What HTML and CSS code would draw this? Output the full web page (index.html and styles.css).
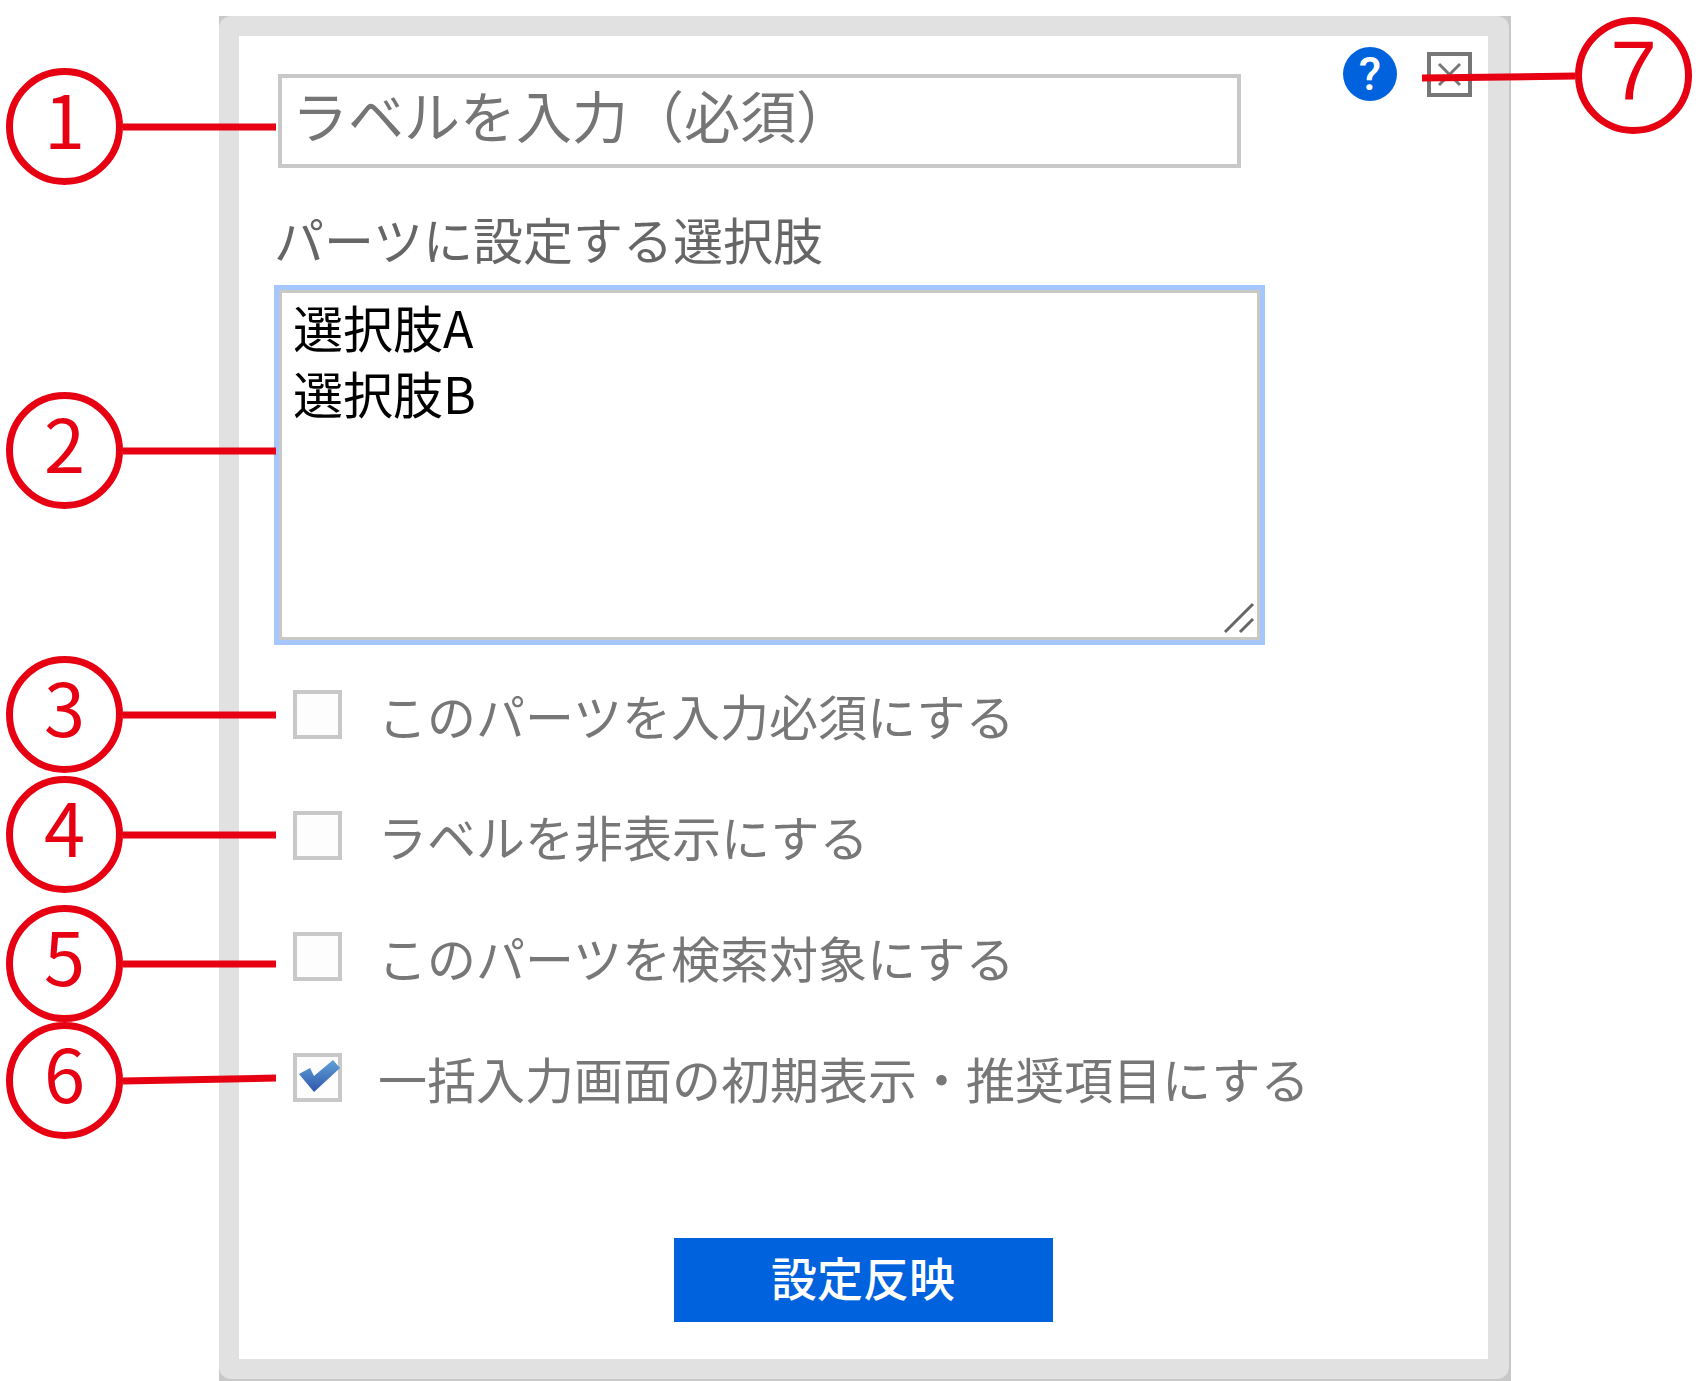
FILE: index.html
```
<!DOCTYPE html>
<html lang="ja">
<head>
  <meta charset="UTF-8" />
  <meta name="viewport" content="width=device-width, initial-scale=1" />
  <title>パーツ設定</title>
  <link rel="stylesheet" href="styles.css">
</head>
<body>

  <main class="dialog">
    <form class="panel">
      <div class="title-row">
        <input type="text" class="label-input" aria-label="ラベル" placeholder="ラベルを入力（必須）" />
        <div class="tools">
          <button type="button" class="help-btn" aria-label="ヘルプ">?</button>
          <button type="button" class="close-btn" aria-label="閉じる">
            <svg viewBox="0 0 37 37" width="37" height="37"><path d="M8 8L29 29M29 8L8 29" stroke="#777" stroke-width="3" fill="none" /></svg>
          </button>
        </div>
      </div>

      <label class="choices-label" for="choices">パーツに設定する選択肢</label>
      <div class="choices">
        <textarea id="choices" spellcheck="false">選択肢A
選択肢B</textarea>
        <svg class="grip" viewBox="0 0 32 32" width="32" height="32"><path d="M2 30L30 2M17 30L30 17" stroke="#666" stroke-width="3" fill="none" /></svg>
      </div>

      <div class="options">
        <label class="option">
          <span class="box"><input type="checkbox" /></span>
          このパーツを入力必須にする
        </label>
        <label class="option">
          <span class="box"><input type="checkbox" /></span>
          ラベルを非表示にする
        </label>
        <label class="option">
          <span class="box"><input type="checkbox" /></span>
          このパーツを検索対象にする
        </label>
        <label class="option">
          <span class="box">
            <input type="checkbox" checked />
            <svg class="tick" viewBox="0 0 49 49" width="49" height="49">
              <defs>
                <linearGradient id="tickFill" x1="0" y1="0" x2="0" y2="1">
                  <stop offset="0" stop-color="#5fa3d6" />
                  <stop offset="1" stop-color="#2f55ae" />
                </linearGradient>
              </defs>
              <path d="M6 21L17 15L21 23L40 7L47 15L21 39Z" fill="url(#tickFill)" />
            </svg>
          </span>
          一括入力画面の初期表示・推奨項目にする
        </label>
      </div>

      <button type="button" class="apply-btn">設定反映</button>
    </form>

    <!-- numbered callouts -->
    <div class="callout c1"><span class="num">1</span><svg class="line" viewBox="0 0 153 20"><path d="M0 10H153" /></svg></div>
    <div class="callout c2"><span class="num">2</span><svg class="line" viewBox="0 0 153 20"><path d="M0 10H153" /></svg></div>
    <div class="callout c3"><span class="num">3</span><svg class="line" viewBox="0 0 153 20"><path d="M0 10H153" /></svg></div>
    <div class="callout c4"><span class="num">4</span><svg class="line" viewBox="0 0 153 20"><path d="M0 10H153" /></svg></div>
    <div class="callout c5"><span class="num">5</span><svg class="line" viewBox="0 0 153 20"><path d="M0 10H153" /></svg></div>
    <div class="callout c6"><span class="num">6</span><svg class="line" viewBox="0 0 153 20"><path d="M0 10L153 7" /></svg></div>
    <div class="callout c7"><svg class="line" viewBox="0 0 153 20"><path d="M0 12L153 10" /></svg><span class="num">7</span></div>
  </main>

</body>
</html>
```

FILE: styles.css
```
* {
  box-sizing: border-box;
}
body {
  margin: 0;
  padding: 16px 195px 0 219px;
  background: #fff;
  font-family: "Noto Sans CJK JP", sans-serif;
  font-size: 49px;
  color: #777;
}
input, textarea, button {
  margin: 0;
  font-family: inherit;
}
svg {
  display: block;
}
.dialog {
  position: relative;
  padding: 0 2px 2px 0;
  background: #c8c8c8;
}
.panel {
  display: flex;
  flex-direction: column;
  padding: 11px 16px 37px 35px;
  background: #fff;
  border: 20px solid #e1e1e1;
  border-right-width: 21px;
  border-radius: 12px;
}
.title-row {
  display: flex;
  align-items: flex-start;
  gap: 102px;
  padding-left: 4px;
}
.label-input {
  flex: 1;
  min-width: 0;
  height: 94px;
  margin-top: 27px;
  padding: 0 10px 16px;
  border: 4px solid #c8c8c8;
  background: #fff;
  font-size: 56px;
}
.label-input::placeholder {
  color: #757575;
  opacity: 1;
}
.tools {
  display: flex;
  align-items: center;
  gap: 30px;
}
.help-btn {
  width: 54px;
  height: 54px;
  padding: 0;
  border: none;
  border-radius: 50%;
  background: #0062dd;
  color: #fff;
  font-family: Roboto, sans-serif;
  font-size: 46px;
  font-weight: 500;
  line-height: 54px;
}
.close-btn {
  width: 45px;
  height: 45px;
  padding: 0;
  border: 4px solid #777;
  background: #fff;
}
.choices-label {
  margin-top: 38px;
  font-size: 50px;
  line-height: 64px;
  color: #666;
}
.choices {
  position: relative;
  height: 360px;
  margin: 15px 207px 0 0;
  border: 5px solid #a6c6ff;
}
.choices textarea {
  display: block;
  width: 100%;
  height: 100%;
  padding: 0 11px;
  border: 3px solid #c8c8c4;
  outline: none;
  resize: none;
  background: #fff;
  color: #000;
  font-size: 50px;
  line-height: 66px;
}
.grip {
  position: absolute;
  right: 5px;
  bottom: 6px;
}
.options {
  display: flex;
  flex-direction: column;
  gap: 72px;
  margin: 45px 0 0 19px;
}
.option {
  display: flex;
  align-items: center;
  gap: 36px;
  height: 49px;
  line-height: 49px;
  white-space: nowrap;
}
.box {
  position: relative;
  flex: none;
}
.box input {
  display: block;
  appearance: none;
  width: 49px;
  height: 49px;
  border: 4px solid #c8c8c8;
  background: #fdfdfd;
}
.tick {
  position: absolute;
  top: 0;
  left: 0;
}
.apply-btn {
  align-self: center;
  width: 379px;
  height: 84px;
  margin: 136px 20px 0 0;
  padding: 0 0 8px;
  border: none;
  background: #0062dd;
  color: #fff;
  font-size: 46px;
  font-weight: 500;
  line-height: 76px;
}

.callout {
  position: absolute;
  left: -213px;
  display: flex;
  align-items: center;
}
.num {
  width: 117px;
  height: 117px;
  border: 7px solid #e60012;
  border-radius: 50%;
  color: #e60012;
  font-size: 74px;
  line-height: 84px;
  text-align: center;
}
.line {
  width: 153px;
  height: 20px;
  fill: none;
  stroke: #e60012;
  stroke-width: 7px;
}
.c1 { top: 52px; }
.c2 { top: 376px; }
.c3 { top: 640px; }
.c4 { top: 760px; }
.c5 { top: 889px; }
.c6 { top: 1006px; }
.c7 {
  top: 1px;
  left: auto;
  right: -181px;
}
.c7 .num {
  font-family: "Liberation Sans", sans-serif;
  font-size: 84px;
  line-height: 92px;
}
```
